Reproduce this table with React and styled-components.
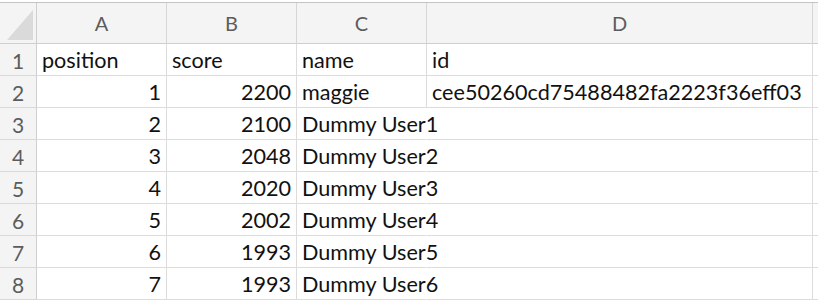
import React from 'react';
import styled, { createGlobalStyle } from 'styled-components';

const GlobalStyle = createGlobalStyle`
  html, body {
    margin: 0;
    padding: 0;
    background: #fff;
  }
`;

const Page = styled.div`
  padding-top: 2px;
  width: 818px;
  height: 300px;
  box-sizing: border-box;
  overflow: hidden;
`;

const Sheet = styled.div`
  display: grid;
  grid-template-columns: 37px 130px 130px 130px 386px 1fr;
  grid-template-rows: 41px;
  grid-auto-rows: 32px;
  border-top: 1px solid #c4c4c4;
  font-family: Lato, "Open Sans", sans-serif;
  font-size: 21.6px;
  color: #111;
`;

const Corner = styled.div`
  position: relative;
  background: #f4f4f4;
  border-right: 1px solid #cfcfcf;
  border-bottom: 1px solid #cfcfcf;
  &::after {
    content: '';
    position: absolute;
    right: 3px;
    bottom: 3px;
    width: 26px;
    height: 30px;
    background: #dadada;
    clip-path: polygon(100% 0, 100% 100%, 0 100%);
  }
`;

const ColHeader = styled.div`
  display: flex;
  align-items: center;
  justify-content: center;
  background: #f4f4f4;
  border-right: 1px solid #d6d6d6;
  border-bottom: 1px solid #cfcfcf;
  color: #5c5c5c;
  font-size: 20px;
`;

const RowHeader = styled.div`
  display: flex;
  align-items: flex-end;
  justify-content: center;
  padding-bottom: 2px;
  background: #f4f4f4;
  border-right: 1px solid #cfcfcf;
  border-bottom: 1px solid #d9d9d9;
  color: #5c5c5c;
  font-size: 21px;
`;

const Cell = styled.div`
  display: flex;
  align-items: flex-end;
  justify-content: ${p => (p.$num ? 'flex-end' : 'flex-start')};
  padding: 0 5px 2px 5px;
  border-right: 1px solid ${p => (p.$open ? 'transparent' : '#dcdcdc')};
  border-bottom: 1px solid #dcdcdc;
  white-space: nowrap;
  min-width: 0;
`;

const cols = ['A', 'B', 'C', 'D', ''];

const rows = [
  ['position', 'score', 'name', 'id'],
  [1, 2200, 'maggie', 'cee50260cd75488482fa2223f36eff03'],
  [2, 2100, 'Dummy User1', ''],
  [3, 2048, 'Dummy User2', ''],
  [4, 2020, 'Dummy User3', ''],
  [5, 2002, 'Dummy User4', ''],
  [6, 1993, 'Dummy User5', ''],
  [7, 1993, 'Dummy User6', ''],
];

export default function App() {
  return (
    <Page>
      <GlobalStyle />
      <Sheet>
        <Corner />
        {cols.map((c, i) => (
          <ColHeader key={i}>{c}</ColHeader>
        ))}
        {rows.map((row, r) => (
          <React.Fragment key={r}>
            <RowHeader>{r + 1}</RowHeader>
            {row.map((v, i) => (
              <Cell
                key={i}
                $num={typeof v === 'number'}
                $open={i === 2 && row[3] === '' && String(v).length > 10}
              >
                {v}
              </Cell>
            ))}
            <Cell />
          </React.Fragment>
        ))}
      </Sheet>
    </Page>
  );
}
